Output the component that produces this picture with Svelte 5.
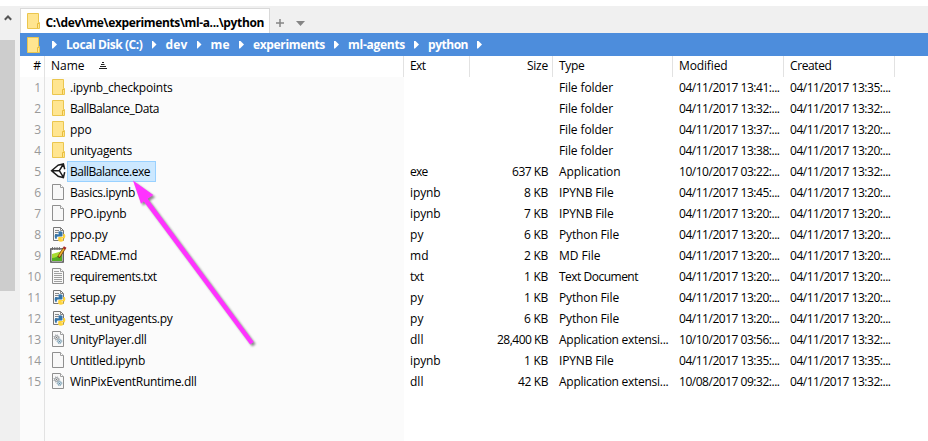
<script>
  // Stretches or tightens the letter spacing so a label takes the given width.
  function fit(node, width) {
    const apply = (w) => {
      node.style.letterSpacing = '0px';
      const natural = node.getBoundingClientRect().width;
      node.style.letterSpacing = (w - natural) / node.textContent.length + 'px';
    };
    apply(width);
    return { update: apply };
  }

  const D = '04/11/2017 ';
  const types = {
    folder: ['File folder', 54],
    app: ['Application', 61.5],
    nb: ['IPYNB File', 54.5],
    py: ['Python File', 60],
    md: ['MD File', 41.5],
    txt: ['Text Document', 79],
    dll: ['Application extensi...', 109.5]
  };
  const exts = { exe: 17.5, ipynb: 30.5, py: 13.5, md: 18.5, txt: 13.5, dll: 13.5 };
  const sizes = { '637 KB': 36, '28,400 KB': 51, '42 KB': 30 };

  const files = [
    ['folder', '.ipynb_checkpoints', 102.5, '', '', 'folder', D + '13:41:...', D + '13:35:...'],
    ['folder', 'BallBalance_Data', 89, '', '', 'folder', D + '13:32:...', D + '13:32:...'],
    ['folder', 'ppo', 21.5, '', '', 'folder', D + '13:37:...', D + '13:20:...'],
    ['folder', 'unityagents', 62, '', '', 'folder', D + '13:38:...', D + '13:20:...'],
    ['unity', 'BallBalance.exe', 80, 'exe', '637 KB', 'app', '10/10/2017 03:22:...', D + '13:32:...'],
    ['blank', 'Basics.ipynb', 65, 'ipynb', '8 KB', 'nb', D + '13:45:...', D + '13:20:...'],
    ['blank', 'PPO.ipynb', 56.5, 'ipynb', '7 KB', 'nb', D + '13:20:...', D + '13:20:...'],
    ['python', 'ppo.py', 37.5, 'py', '6 KB', 'py', D + '13:20:...', D + '13:20:...'],
    ['note', 'README.md', 67, 'md', '2 KB', 'md', D + '13:20:...', D + '13:20:...'],
    ['text', 'requirements.txt', 86.5, 'txt', '1 KB', 'txt', D + '13:20:...', D + '13:20:...'],
    ['python', 'setup.py', 45.5, 'py', '1 KB', 'py', D + '13:20:...', D + '13:20:...'],
    ['python', 'test_unityagents.py', 102.5, 'py', '6 KB', 'py', D + '13:20:...', D + '13:20:...'],
    ['gears', 'UnityPlayer.dll', 76.5, 'dll', '28,400 KB', 'dll', '10/10/2017 03:56:...', D + '13:32:...'],
    ['blank', 'Untitled.ipynb', 75, 'ipynb', '1 KB', 'nb', D + '13:35:...', D + '13:35:...'],
    ['gears', 'WinPixEventRuntime.dll', 126.5, 'dll', '42 KB', 'dll', '10/08/2017 09:32:...', D + '13:32:...']
  ];
  const crumbs = [
    ['Local Disk (C:)', 76.5], ['dev', 22], ['me', 19.5], ['experiments', 72], ['ml-agents', 57], ['python', 40]
  ];
</script>

{#snippet folder()}
  <svg class="folder" width="12" height="16" viewBox="0 0 12 16">
    <path d="M.5.5h11v9h1v6H.5z" fill="#ffe590" stroke="#ebc64e" />
    <path d="M10.5 15V10.5H12" fill="none" stroke="#e8bc3c" />
  </svg>
{/snippet}

{#snippet page()}
  <path d="M2.5.5h8l3 3v12h-11z" fill="#f8f8f8" stroke="#8f8f8f" />
  <path d="M10.5.5v3h3" fill="#fff" stroke="#a0a0a0" />
{/snippet}

{#snippet icon(kind)}
  {#if kind === 'folder'}
    {@render folder()}
  {:else}
    <svg width="16" height="16" viewBox="0 0 16 16">
      {#if kind === 'unity'}
        <path d="M1.200 8 7 2.600 12.800 1.200 14.400 8l-1.600 6.600L7 13.200z" fill="#fff" />
        <path d="M8.300 2 1.600 7.700l6.700 5.700M7.800 2.200l5.600-1.300 1.300 5.400M7.800 13.200l5.600 1.300 1.300-5.400M2 7.700h7.300M9.300 7.700l3.900-6.200M9.300 7.700l3.900 6.200" fill="none" stroke="#1c1c1c" stroke-width="1.500" />
      {:else if kind === 'python'}
        <path d="M3.500 1.500h7l3 3v10h-10z" fill="#f6f6f6" stroke="#777" />
        <path d="M10.500 1.500v3h3M5 4.500h4M5 6.500h3M5 8.500h2" fill="none" stroke="#888" />
        <path d="M8 6q2-1.300 4.500 0v3.400q0 1-1 1H8q-1.200 0-1.200 1v1.300H5.200q-1.400-2.400 0-4.500H9z" fill="#3474a9" />
        <path d="M13.200 8h1.500q1.600 2.300 0 4.500h-3.200v.7h2v1.500q-2.700 2-5.300 0V12q0-1 1-1H12q1.200 0 1.200-1z" fill="#ffd43b" />
      {:else if kind === 'note'}
        <path d="M.8 1.800h12.400v13.400H.8z" fill="#fff" stroke="#4a4a4a" stroke-width="1.300" />
        <path d="M2 7q4-1 10-3v10H2z" fill="#a8dc31" />
        <path d="M2 11q5 0 10-5v8H2z" fill="#55ae22" />
        <path d="M2.500 0v3M4.800 0v3M7.100 0v3M9.400 0v3" stroke="#666" stroke-width=".9" />
        <path d="M8.500 10.500 14.100 1.500" stroke="#713d0c" stroke-width="3" />
        <path d="M9 9.500 14.100 1.500" stroke="#efb22c" stroke-width="1.600" />
        <path d="m14 1.800 1.200-1.800" stroke="#a42828" stroke-width="3" />
      {:else}
        {@render page()}
        {#if kind === 'text'}
          <path d="M4 3.500h5M4 5.500h8M4 7.500h8M4 9.500h8M4 11.500h8M4 13.500h8" stroke="#a0a0a0" />
        {:else if kind === 'gears'}
          <circle cx="6.500" cy="6.500" r="1.900" fill="#eee" stroke="#8b9196" />
          <circle cx="6.500" cy="6.500" r="2.700" fill="none" stroke="#9ba1a5" stroke-dasharray="1 1.200" />
          <circle cx="6.500" cy="6.500" r=".7" fill="#777" />
          <circle cx="9.500" cy="10.300" r="1.700" fill="#e6f4fc" stroke="#7c9fb3" />
          <circle cx="9.500" cy="10.300" r="2.400" fill="none" stroke="#8bacbd" stroke-dasharray="1 1" />
          <circle cx="9.500" cy="10.300" r=".6" fill="#477086" />
        {/if}
      {/if}
    </svg>
  {/if}
{/snippet}

<div class="window">
  <aside>
    <svg class="up" width="8" height="7" viewBox="0 0 8 7"><path d="M.8 5.700 4 2.500l3.200 3.200" fill="none" stroke="#555" stroke-width="2" /></svg>
    <div class="thumb"></div>
  </aside>
  <main>
    <div class="tabs">
      <div class="tab">{@render folder()}<b use:fit={218.5}>C:\dev\me\experiments\ml-a...\python</b></div>
      <svg class="tools" width="32" height="10" viewBox="0 0 32 10">
        <path d="M1 5h8M5 1v8" stroke="#858585" stroke-width="1.500" />
        <path d="M21 3h9l-4.500 5z" fill="#858585" />
      </svg>
    </div>
    <nav>
      {@render folder()}
      <i class="first"></i>
      {#each crumbs as [label, w]}
        <b use:fit={w}>{label}</b><i></i>
      {/each}
    </nav>
    <div class="row head">
      <div class="num">#</div>
      <div class="name"><span use:fit={33.5}>Name</span>
        <svg class="sort" width="8" height="8" viewBox="0 0 8 8"><path d="M3 .5h2M2 2.500h3.500M1 4.500h6M0 6.500h8" stroke="#222" /></svg>
      </div>
      <div><span use:fit={15.5}>Ext</span></div>
      <div class="size"><span use:fit={21}>Size</span></div>
      <div><span use:fit={25.5}>Type</span></div>
      <div><span use:fit={48.5}>Modified</span></div>
      <div><span use:fit={41.5}>Created</span></div>
    </div>
    <div class="list">
      {#each files as [kind, name, w, ext, size, type, modified, created], i}
        <div class="row">
          <div class="num">{i + 1}</div>
          <div class="name">
            <div class="icon">{@render icon(kind)}</div>
            <div class="label" class:selected={i === 4}><span use:fit={w}>{name}</span></div>
          </div>
          <div>{#if ext}<span use:fit={exts[ext]}>{ext}</span>{/if}</div>
          <div class="size">{#if size}<span use:fit={sizes[size] ?? 24}>{size}</span>{/if}</div>
          <div><span use:fit={types[type][1]}>{types[type][0]}</span></div>
          <div><span use:fit={100.5}>{modified}</span></div>
          <div><span use:fit={100.5}>{created}</span></div>
        </div>
      {/each}
      <div class="row rest"><div class="num"></div><div class="name"></div></div>
    </div>
  </main>
  <svg class="arrow" width="928" height="441" viewBox="0 0 928 441">
    <path d="M133 180.500 153.300 195l-5.600 3.800 106 143.200-3.500 2.600-106.400-143.200-2.800 2.300z" fill="#ff33ff" />
  </svg>
</div>

<style>
  .window {
    position: relative;
    display: flex;
    width: 928px;
    height: 441px;
    overflow: hidden;
    background: #fff;
    color: #000;
    font: 12px/21px 'Open Sans', 'Noto Sans', sans-serif;
    white-space: nowrap;
  }
  svg { display: block; flex: none; overflow: visible; }
  span, b { display: inline-block; flex: none; }
  aside {
    box-sizing: border-box;
    width: 20px;
    margin-top: 6px;
    padding-top: 8px;
    background: #f0f0f0;
  }
  .up { margin: 0 0 19px 4px; }
  .thumb { width: 15px; height: 251px; background: #cdcdcd; }
  main { display: flex; flex-direction: column; width: 908px; padding-top: 6px; }
  .tabs { display: flex; align-items: flex-end; height: 27px; background: #f0f0f0; }
  .tab {
    box-sizing: border-box;
    display: flex;
    align-items: center;
    width: 250px;
    height: 25px;
    padding-left: 6px;
    border: 1px solid #d9d9d9;
    border-bottom: 0;
    background: #fff;
  }
  .tab b { margin: 2px 0 0 6.500px; }
  .tools { margin: 0 0 5px 5px; }
  nav {
    display: flex;
    align-items: center;
    height: 23px;
    padding-left: 7px;
    background: #4d8ddc;
    color: #fff;
  }
  nav i {
    width: 5px;
    height: 8px;
    margin: 0 9px 0 9px;
    background: #fff;
    clip-path: polygon(0 0, 20% 0, 100% 50%, 20% 100%, 0 100%);
  }
  nav i.first { margin-left: 13px; }
  .row {
    display: grid;
    grid-template-columns: 25px 359px 66px 83px 120px 111px 111px;
    height: 21px;
  }
  .row > div { box-sizing: border-box; padding-left: 6px; }
  .row > .num { padding: 0 3px 0 0; border-right: 1px solid #e2e2e2; color: #999; text-align: right; background: #fbfbfb; }
  .row > .name { display: flex; padding-left: 5px; background: #fbfbfb; }
  .row > .size { padding: 0 5px 0 0; text-align: right; }
  .head { line-height: 19px; }
  .head > div { border-right: 1px solid #e2e2e2; }
  .head > .num, .head > .name { background: #fff; color: #000; }
  .head > .name { padding-left: 6px; }
  .head > .size { padding-right: 4px; }
  .sort { margin: 6px 0 0 14px; }
  .icon { display: flex; justify-content: center; width: 16px; margin-right: 1px; padding-top: 2px; }
  .label { box-sizing: border-box; height: 21px; padding: 0 5px 0 2px; border: 1px solid transparent; line-height: 19px; }
  .selected { border-color: #99d1ff; background: #cce8ff; }
  .list { flex: 1; display: flex; flex-direction: column; }
  .rest { flex: 1; height: auto; }
  .arrow { position: absolute; left: 0; top: 0; filter: drop-shadow(2px 2px 1px rgba(0, 0, 0, 0.45)); }
</style>
